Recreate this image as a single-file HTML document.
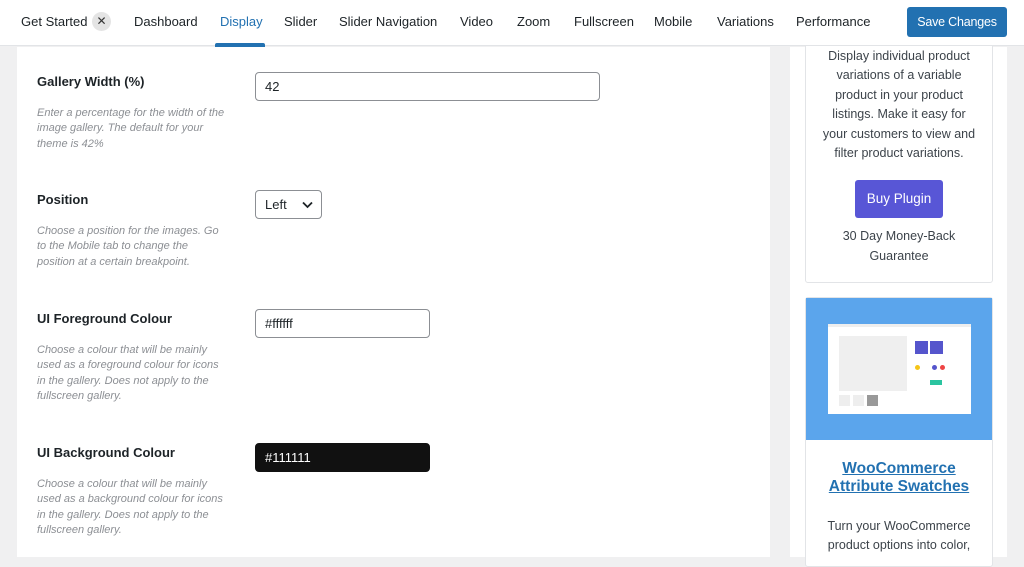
<!DOCTYPE html>
<html><head><style>
*{margin:0;padding:0;box-sizing:border-box}
body{width:1024px;height:557px;overflow:hidden;background:#f0f0f1;font-family:"Liberation Sans",sans-serif;color:#1d2327;position:relative}
.top{position:absolute;left:0;top:0;width:1024px;height:46px;background:#fff;border-bottom:1px solid #e2e4e7;z-index:5}
.tab{position:absolute;top:14px;font-size:13px;color:#1d2327;white-space:nowrap}
.x{position:absolute;left:92px;top:12px;width:19px;height:19px;border-radius:50%;background:#e4e4e4;font-size:12px;text-align:center;line-height:19px;color:#333}
.ul{position:absolute;left:215px;top:43px;width:50px;height:4px;background:#2271b1;border-radius:2px 2px 0 0}
.save{position:absolute;left:907px;top:7px;width:100px;height:30px;background:#2271b1;border-radius:3px;color:#fff;font-size:12.5px;text-align:center;line-height:30px;letter-spacing:-0.2px}
.card{position:absolute;left:17px;top:47px;width:753px;height:510px;background:#fff}
.lbl{position:absolute;left:37px;font-size:13px;font-weight:bold;color:#1d2327}
.desc{position:absolute;left:37px;width:192px;font-size:11px;font-style:italic;color:#8c8f94;line-height:15.3px}
.inp{position:absolute;left:255px;border:1px solid #8c8f94;border-radius:4px;background:#fff;font-size:13px;padding-left:9px;line-height:27px;height:29px}
.side{position:absolute;left:790px;top:47px;width:217px;height:510px;background:#fff}
.sc{position:absolute;left:805px;width:188px;border:1px solid #e2e4e7;border-radius:3px;background:#fff;text-align:center;font-size:12.5px;color:#3c434a;line-height:19.4px}
</style></head><body>
<div class="top">
<span class="tab" style="left:21px">Get Started</span><span class="x">✕</span>
<span class="tab" style="left:134px">Dashboard</span>
<span class="tab" style="left:220px;color:#2271b1">Display</span>
<span class="tab" style="left:284px">Slider</span>
<span class="tab" style="left:339px">Slider Navigation</span>
<span class="tab" style="left:460px">Video</span>
<span class="tab" style="left:517px">Zoom</span>
<span class="tab" style="left:574px">Fullscreen</span>
<span class="tab" style="left:654px">Mobile</span>
<span class="tab" style="left:717px">Variations</span>
<span class="tab" style="left:796px">Performance</span>
<div class="ul"></div>
<div class="save">Save Changes</div>
</div>
<div class="card"></div>
<div class="lbl" style="top:74px">Gallery Width (%)</div>
<div class="desc" style="top:106px">Enter a percentage for the width of the image gallery. The default for your theme is 42%</div>
<div class="inp" style="top:72px;width:345px">42</div>
<div class="lbl" style="top:192px">Position</div>
<div class="desc" style="top:224px">Choose a position for the images. Go to the Mobile tab to change the position at a certain breakpoint.</div>
<div class="inp" style="top:190px;width:67px">Left<svg style="position:absolute;right:8px;top:10px" width="11" height="8" viewBox="0 0 11 8"><path d="M1 1.5l4.5 4.5 4.5-4.5" stroke="#1d2327" stroke-width="1.8" fill="none"/></svg></div>
<div class="lbl" style="top:311px">UI Foreground Colour</div>
<div class="desc" style="top:343px">Choose a colour that will be mainly used as a foreground colour for icons in the gallery. Does not apply to the fullscreen gallery.</div>
<div class="inp" style="top:309px;width:175px">#ffffff</div>
<div class="lbl" style="top:445px">UI Background Colour</div>
<div class="desc" style="top:477px">Choose a colour that will be mainly used as a background colour for icons in the gallery. Does not apply to the fullscreen gallery.</div>
<div class="inp" style="top:443px;width:175px;background:#111;color:#fff;border-color:#111">#111111</div>
<div class="side"></div>
<div class="sc" style="top:30px;height:253px;padding-top:16px">Display individual product<br>variations of a variable<br>product in your product<br>listings. Make it easy for<br>your customers to view and<br>filter product variations.
<div style="margin:17px auto 9px;width:88px;height:38px;background:#5856d6;border-radius:3px;color:#fff;font-size:13.5px;line-height:38px">Buy Plugin</div>
30 Day Money-Back<br>Guarantee</div>
<div class="sc" style="top:297px;height:270px">
<div style="height:142px;background:#5ba5ec;position:relative">
<div style="position:absolute;left:22px;top:26px;width:143px;height:90px;background:#fff;border-top:3px solid #eee">
<div style="position:absolute;left:11px;top:9px;width:68px;height:55px;background:#efefef"></div>
<div style="position:absolute;left:11px;top:68px;width:11px;height:11px;background:#eee"></div>
<div style="position:absolute;left:25px;top:68px;width:11px;height:11px;background:#eee"></div>
<div style="position:absolute;left:39px;top:68px;width:11px;height:11px;background:#999"></div>
<div style="position:absolute;left:87px;top:14px;width:13px;height:13px;background:#5555cc"></div>
<div style="position:absolute;left:102px;top:14px;width:13px;height:13px;background:#5555cc"></div>
<div style="position:absolute;left:87px;top:38px;width:5px;height:5px;border-radius:50%;background:#f5c518"></div>
<div style="position:absolute;left:104px;top:38px;width:5px;height:5px;border-radius:50%;background:#5555cc"></div>
<div style="position:absolute;left:112px;top:38px;width:5px;height:5px;border-radius:50%;background:#e44"></div>
<div style="position:absolute;left:102px;top:53px;width:12px;height:5px;background:#2bc4a0"></div>
</div></div>
<div style="margin-top:20px;font-size:15.5px;color:#2271b1;text-decoration:underline;font-weight:bold;line-height:18px">WooCommerce<br>Attribute Swatches</div>
<div style="margin-top:21px">Turn your WooCommerce<br>product options into color,</div>
</div>
</body></html>
